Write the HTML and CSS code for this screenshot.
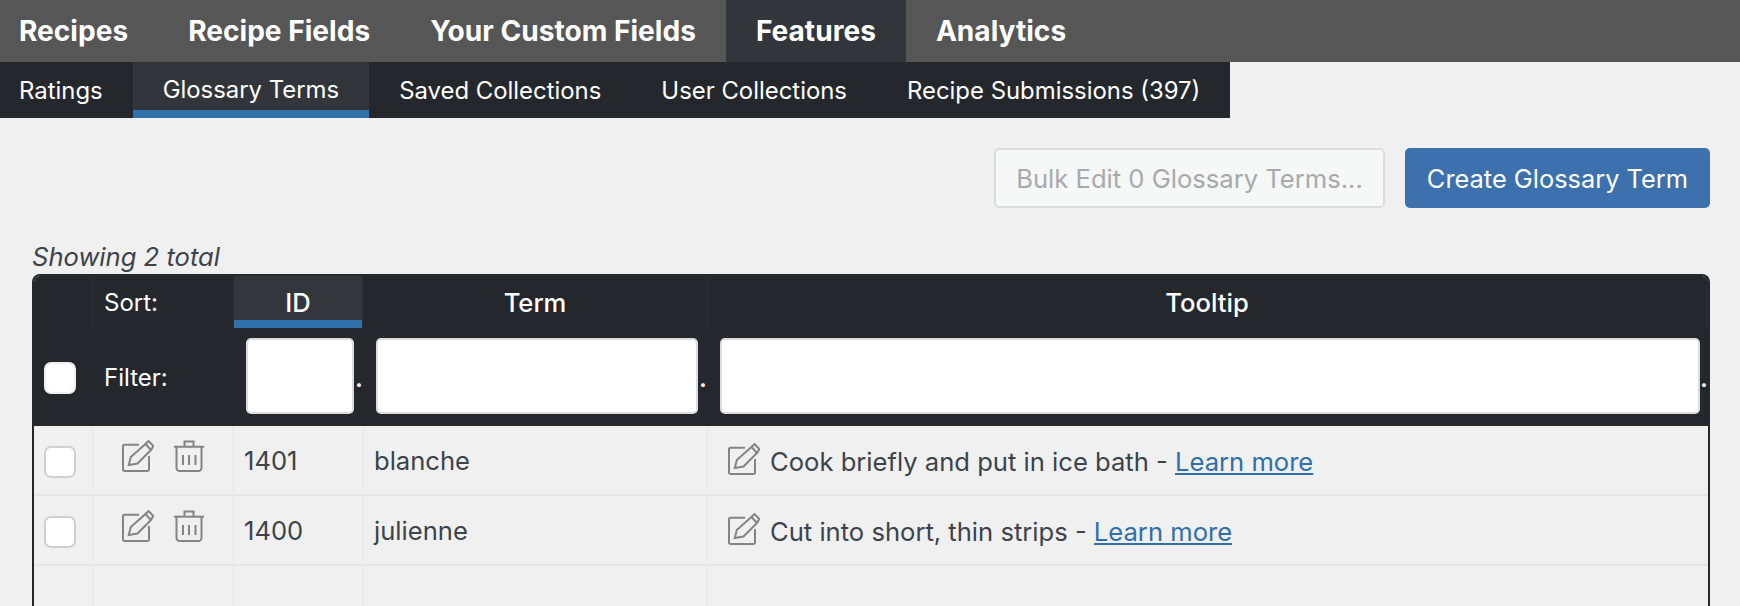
FILE: index.html
```html
<!DOCTYPE html>
<html lang="en">
<head>
    <meta charset="UTF-8">
    <title>Glossary Terms</title>
    <link rel="stylesheet" href="styles.css">
</head>
<body>

<!-- Main Tabs -->
<nav class="main-nav">
    <a href="#">Recipes</a>
    <a href="#">Recipe Fields</a>
    <a href="#">Your Custom Fields</a>
    <a href="#" class="active">Features</a>
    <a href="#">Analytics</a>
</nav>

<!-- Sub Tabs -->
<nav class="sub-nav">
    <a href="#">Ratings</a>
    <a href="#" class="active">Glossary Terms</a>
    <a href="#">Saved Collections</a>
    <a href="#">User Collections</a>
    <a href="#">Recipe Submissions (397)</a>
</nav>

<div class="content">
    <div class="actions">
        <button class="btn btn-disabled" type="button" disabled>Bulk Edit 0 Glossary Terms...</button>
        <button class="btn btn-primary" type="button">Create Glossary Term</button>
    </div>

    <p class="total">Showing 2 total</p>

    <div class="table-wrap">
        <table class="terms">
            <colgroup>
                <col class="col-check">
                <col class="col-actions">
                <col class="col-id">
                <col class="col-term">
                <col>
            </colgroup>
            <thead>
                <tr class="sort-row">
                    <th></th>
                    <th class="row-label">Sort:</th>
                    <th class="sorted">ID</th>
                    <th>Term</th>
                    <th>Tooltip</th>
                </tr>
                <tr class="filter-row">
                    <th><input type="checkbox" class="check"></th>
                    <th class="row-label">Filter:</th>
                    <th><div class="filter"><input type="text" aria-label="ID"><span>.</span></div></th>
                    <th><div class="filter"><input type="text" aria-label="Term"><span>.</span></div></th>
                    <th><div class="filter"><input type="text" aria-label="Tooltip"><span>.</span></div></th>
                </tr>
            </thead>
            <tbody>
                <tr>
                    <td><input type="checkbox" class="check"></td>
                    <td>
                        <div class="row-icons">
                            <svg class="icon" viewBox="0 0 32 32"><use href="#icon-edit"></use></svg>
                            <svg class="icon" viewBox="0 0 32 32"><use href="#icon-trash"></use></svg>
                        </div>
                    </td>
                    <td>1401</td>
                    <td>blanche</td>
                    <td>
                        <div class="tooltip-cell">
                            <svg class="icon" viewBox="0 0 32 32"><use href="#icon-edit"></use></svg>
                            <span>Cook briefly and put in ice bath - <a href="#">Learn more</a></span>
                        </div>
                    </td>
                </tr>
                <tr>
                    <td><input type="checkbox" class="check"></td>
                    <td>
                        <div class="row-icons">
                            <svg class="icon" viewBox="0 0 32 32"><use href="#icon-edit"></use></svg>
                            <svg class="icon" viewBox="0 0 32 32"><use href="#icon-trash"></use></svg>
                        </div>
                    </td>
                    <td>1400</td>
                    <td>julienne</td>
                    <td>
                        <div class="tooltip-cell">
                            <svg class="icon" viewBox="0 0 32 32"><use href="#icon-edit"></use></svg>
                            <span>Cut into short, thin strips - <a href="#">Learn more</a></span>
                        </div>
                    </td>
                </tr>
                <tr class="filler">
                    <td></td>
                    <td></td>
                    <td></td>
                    <td></td>
                    <td></td>
                </tr>
            </tbody>
        </table>
    </div>
</div>

<!-- Icons -->
<svg class="icon-defs" aria-hidden="true">
    <symbol id="icon-edit" viewBox="0 0 32 32">
        <path d="M17 4.7H2.5A1.5 1.5 0 0 0 1 6.2V29.5A1.5 1.5 0 0 0 2.5 31H25.5A1.5 1.5 0 0 0 27 29.5V16"/>
        <path d="M6.8 25L8.8 17 23.5 4 29 10 15.5 23.5Z"/>
        <path d="M23.5 4L26.5 1 31.3 6 29 10"/>
    </symbol>
    <symbol id="icon-trash" viewBox="0 0 32 32">
        <path d="M1 6.7H31"/>
        <path d="M11.5 6.5V1.5H20.5V6.5"/>
        <path d="M3.5 7V28A3 3 0 0 0 6.5 31H25.5A3 3 0 0 0 28.5 28V7"/>
        <path d="M10 15V25M16 15V25M22.5 15V25"/>
    </symbol>
</svg>

</body>
</html>
```

FILE: styles.css
```css
* {
    margin: 0;
    padding: 0;
    box-sizing: border-box;
    font-family: "Inter", sans-serif;
}

html, body {
    height: 100%;
    overflow: hidden;
}

body {
    background: #f0f0f0;
    color: #3c434a;
    font-size: 25.6px;
}

a {
    text-decoration: none;
}

/* Main Tabs */
.main-nav {
    display: flex;
    height: 62px;
    background: #565656;
}

.main-nav a {
    display: flex;
    align-items: center;
    padding: 0 30px;
    color: white;
    font-size: 28.1px;
    font-weight: 700;
    white-space: nowrap;
}

.main-nav a:first-child {
    padding-left: 19px;
}

.main-nav a.active {
    background: #32363b;
}

/* Sub Tabs */
.sub-nav {
    display: flex;
    width: 1230px;
    height: 56px;
    background: #24282d;
}

.sub-nav a {
    display: flex;
    align-items: center;
    padding: 0 30px;
    color: white;
    font-size: 23.9px;
    white-space: nowrap;
}

.sub-nav a:first-child {
    padding-left: 19px;
}

.sub-nav a.active {
    background: #32363b;
    border-bottom: 8px solid #2f71a8;
    padding-top: 6px;
}

.content {
    padding: 30px 30px 0 32px;
}

/* Buttons */
.actions {
    display: flex;
    justify-content: flex-end;
    gap: 20px;
}

.btn {
    height: 60px;
    padding: 0 20px;
    font-size: 25.6px;
    border-radius: 5px;
}

.btn-disabled {
    background: #f6f7f7;
    border: 2px solid #dcdcde;
    color: #a7aaad;
}

.btn-primary {
    font-size: 25.4px;
    background: #3c71ae;
    border: 2px solid #3c71ae;
    color: white;
}

.total {
    margin-top: 30px;
    height: 36px;
    line-height: 38px;
    font-style: italic;
}

/* Table */
.table-wrap {
    border: 2px solid #24282d;
    border-bottom: none;
    border-radius: 8px 8px 0 0;
    overflow: hidden;
}

.terms {
    width: 100%;
    table-layout: fixed;
    border-collapse: separate;
    border-spacing: 0;
}

.col-check {
    width: 60px;
}

.col-actions {
    width: 140px;
}

.col-id {
    width: 130px;
}

.col-term {
    width: 344px;
}

.terms th {
    background: #24282d;
    color: white;
    font-size: 25.6px;
    font-weight: 500;
}

.sort-row th {
    height: 52px;
    border-right: 2px solid #282c31;
}

.sort-row .sorted {
    background: #33373c;
    box-shadow: inset 0 -8px 0 #2f71a8;
}

.filter-row th {
    height: 98px;
}

.terms .row-label {
    padding-left: 10px;
    font-size: 24px;
    font-weight: 400;
    text-align: left;
}

.filter {
    display: flex;
    align-items: center;
    padding: 0 0 2px 12px;
}

.filter input {
    flex: 1;
    min-width: 0;
    height: 76px;
    background: white;
    border: 2px solid #dcdcde;
    border-radius: 5px;
    outline: none;
}

.filter span {
    width: 10px;
    margin-top: 6px;
    font-size: 22px;
    font-weight: 700;
    text-align: center;
}

.filter-row th:last-child .filter span {
    width: 8px;
}

.check {
    display: block;
    width: 32px;
    height: 32px;
    margin-left: 10px;
    background: white;
    border: 2px solid #d0d0d0;
    border-radius: 7px;
    appearance: none;
}

.filter-row .check {
    margin-top: 2px;
    border-color: #f0f0f0;
}

.terms td {
    height: 70px;
    padding-left: 10px;
    border-right: 2px solid #ebebeb;
    border-bottom: 2px solid #e6e6e6;
    font-size: 25.6px;
}

.terms td:first-child {
    padding-left: 0;
}

.terms td:last-child {
    padding-left: 20px;
    border-right: none;
}

.terms td .check {
    margin-top: 4px;
}

.filler td {
    height: 120px;
    border-bottom: none;
}

/* Row Icons */
.icon {
    display: block;
    flex: none;
    width: 32px;
    height: 32px;
    fill: none;
    stroke: #848484;
    stroke-width: 2;
}

.icon-defs {
    display: none;
}

.row-icons {
    display: flex;
    gap: 19px;
    padding: 0 0 8px 18px;
}

.tooltip-cell {
    display: flex;
    align-items: flex-start;
    gap: 10px;
}

.tooltip-cell span {
    margin-top: 3px;
}

.tooltip-cell a {
    color: #2f6fab;
    text-decoration: underline;
}
```
